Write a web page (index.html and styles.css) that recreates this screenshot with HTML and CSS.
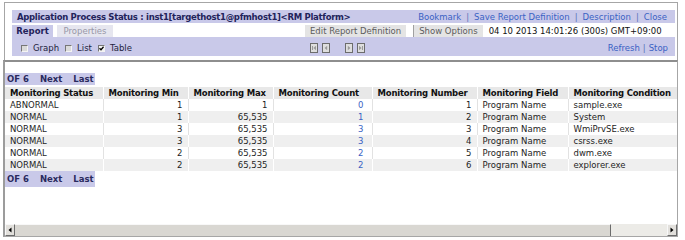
FILE: index.html
```html
<!DOCTYPE html>
<html lang="en">
<head>
    <meta charset="UTF-8"/>
    <title>Application Process Status</title>
    <link rel="stylesheet" href="styles.css">
</head>
<body>
<div class="report-frame">
    <div class="title-bar">
        <span class="report-title">Application Process Status : inst1[targethost1@pfmhost1]&lt;RM Platform&gt;</span>
        <span class="title-links">
            <a href="#">Bookmark</a><span class="sep">|</span><a href="#">Save Report Definition</a><span class="sep">|</span><a href="#">Description</a><span class="sep">|</span><a href="#">Close</a>
        </span>
    </div>

    <div class="tab-row">
        <div class="tabs">
            <span class="tab tab-active">Report</span>
            <span class="tab">Properties</span>
        </div>
        <span class="tab-button">Edit Report Definition</span>
        <span class="tab-button tab-button-options">Show Options</span>
        <span class="report-date">04 10 2013 14:01:26 (300s) GMT+09:00</span>
    </div>

    <div class="tool-bar">
        <div class="views">
            <label class="view"><span class="check"></span>Graph</label>
            <label class="view"><span class="check"></span>List</label>
            <label class="view"><span class="check checked">
                <svg width="5" height="5" viewBox="0 0 5 5"><path d="M0.5 2.3 L2 3.8 L4.6 0.8" fill="none" stroke="#000" stroke-width="1.3"/></svg>
            </span>Table</label>
        </div>
        <div class="pager">
            <!-- first -->
            <svg class="pager-btn" width="8" height="10" viewBox="0 0 8 10">
                <rect x="0.5" y="0.5" width="7" height="9" fill="#dedede" stroke="#6c6c6c"/>
                <path d="M2.5 3 V7" stroke="#9a9a9a"/>
                <path d="M6 2.8 L3.4 5 L6 7.2 Z" fill="#9a9a9a"/>
            </svg>
            <!-- previous -->
            <svg class="pager-btn" width="8" height="10" viewBox="0 0 8 10">
                <rect x="0.5" y="0.5" width="7" height="9" fill="#dedede" stroke="#6c6c6c"/>
                <path d="M5.2 2.8 L2.6 5 L5.2 7.2 Z" fill="#9a9a9a"/>
            </svg>
            <!-- next -->
            <svg class="pager-btn pager-gap" width="8" height="10" viewBox="0 0 8 10">
                <rect x="0.5" y="0.5" width="7" height="9" fill="#dedede" stroke="#6c6c6c"/>
                <path d="M2.8 2.8 L5.4 5 L2.8 7.2 Z" fill="#9a9a9a"/>
            </svg>
            <!-- last -->
            <svg class="pager-btn" width="8" height="10" viewBox="0 0 8 10">
                <rect x="0.5" y="0.5" width="7" height="9" fill="#dedede" stroke="#6c6c6c"/>
                <path d="M2 2.8 L4.6 5 L2 7.2 Z" fill="#9a9a9a"/>
                <path d="M5.5 3 V7" stroke="#9a9a9a"/>
            </svg>
        </div>
        <span class="tool-links"><a href="#">Refresh</a><span class="sep">|</span><a href="#">Stop</a></span>
    </div>
</div>

<div class="data-frame">
    <div class="data-view">
        <div class="page-nav">
            <span>OF 6</span><span>Next</span><span>Last</span>
        </div>

        <table class="data-table">
            <colgroup>
                <col style="width: 98px">
                <col style="width: 85px">
                <col style="width: 85px">
                <col style="width: 99px">
                <col style="width: 105px">
                <col style="width: 91px">
                <col style="width: 112px">
            </colgroup>
            <thead>
            <tr>
                <th>Monitoring Status</th>
                <th>Monitoring Min</th>
                <th>Monitoring Max</th>
                <th>Monitoring Count</th>
                <th>Monitoring Number</th>
                <th>Monitoring Field</th>
                <th>Monitoring Condition</th>
            </tr>
            </thead>
            <tbody>
            <tr>
                <td>ABNORMAL</td><td class="num">1</td><td class="num">1</td>
                <td class="num count"><a href="#">0</a></td><td class="num">1</td>
                <td>Program Name</td><td>sample.exe</td>
            </tr>
            <tr>
                <td>NORMAL</td><td class="num">1</td><td class="num">65,535</td>
                <td class="num count"><a href="#">1</a></td><td class="num">2</td>
                <td>Program Name</td><td>System</td>
            </tr>
            <tr>
                <td>NORMAL</td><td class="num">3</td><td class="num">65,535</td>
                <td class="num count"><a href="#">3</a></td><td class="num">3</td>
                <td>Program Name</td><td>WmiPrvSE.exe</td>
            </tr>
            <tr>
                <td>NORMAL</td><td class="num">3</td><td class="num">65,535</td>
                <td class="num count"><a href="#">3</a></td><td class="num">4</td>
                <td>Program Name</td><td>csrss.exe</td>
            </tr>
            <tr>
                <td>NORMAL</td><td class="num">2</td><td class="num">65,535</td>
                <td class="num count"><a href="#">2</a></td><td class="num">5</td>
                <td>Program Name</td><td>dwm.exe</td>
            </tr>
            <tr>
                <td>NORMAL</td><td class="num">2</td><td class="num">65,535</td>
                <td class="num count"><a href="#">2</a></td><td class="num">6</td>
                <td>Program Name</td><td>explorer.exe</td>
            </tr>
            </tbody>
        </table>

        <div class="page-nav page-nav-bottom">
            <span>OF 6</span><span>Next</span><span>Last</span>
        </div>
    </div>

    <div class="hscroll">
        <span class="hscroll-btn">
            <svg width="4" height="6" viewBox="0 0 4 6"><path d="M3.5 0.5 L0.5 3 L3.5 5.5 Z" fill="#000"/></svg>
        </span>
        <span class="hscroll-thumb"></span>
        <span class="hscroll-track"></span>
        <span class="hscroll-btn">
            <svg width="4" height="6" viewBox="0 0 4 6"><path d="M0.5 0.5 L3.5 3 L0.5 5.5 Z" fill="#000"/></svg>
        </span>
    </div>
</div>
</body>
</html>
```

FILE: styles.css
```css
/* Base */
body {
    margin: 0;
    background-color: #ffffff;
    font-family: "DejaVu Sans", Verdana, sans-serif;
    font-size: 8.5px;
    color: #1e1e1e;
}

a {
    color: #3a62c4;
    text-decoration: none;
}

.sep {
    color: #5a74b8;
}

/* Report header frame */
.report-frame {
    margin: 2px 7px 0 4px;
    padding: 7px 2px 4px 7px;
    border: 1px solid #a6a6a6;
    border-bottom: none;
}

.title-bar {
    display: flex;
    justify-content: space-between;
    align-items: center;
    height: 13px;
    padding: 0 8px 0 5px;
    background-color: #c9c9e9;
}

.report-title {
    font-weight: bold;
    letter-spacing: -0.3px;
    color: #23235b;
}

.title-links .sep {
    margin: 0 5px;
}

/* Tabs */
.tab-row {
    display: flex;
    height: 12px;
    margin-top: 2px;
    line-height: 12px;
}

.tabs {
    display: flex;
    gap: 4px;
    width: 293px;
}

.tab {
    width: 56px;
    text-align: center;
    background-color: #e6e6ef;
    color: #9898a8;
}

.tab-active {
    width: 41px;
    background-color: #c9c9e9;
    color: #23235b;
    font-weight: bold;
}

.tab-button {
    padding: 0 5px;
    background-color: #e4e4e4;
    color: #5c5c5c;
}

.tab-button-options {
    margin-left: 7px;
    border-left: 1px solid #a0a0a0;
}

.report-date {
    flex: 1;
    padding-left: 6px;
    color: #111111;
}

/* Toolbar */
.tool-bar {
    display: flex;
    align-items: center;
    box-sizing: border-box;
    height: 19px;
    padding: 3px 7px 0 9px;
    background-color: #c9c9e9;
}

.views {
    display: flex;
    align-items: center;
    width: 289px;
}

.view {
    display: flex;
    align-items: center;
    margin-right: 6px;
    color: #1e1e3e;
}

.check {
    display: flex;
    align-items: center;
    justify-content: center;
    box-sizing: border-box;
    width: 7px;
    height: 7px;
    margin-right: 5px;
    border: 1px solid;
    border-color: #767676 #f4f4f4 #f4f4f4 #767676;
    background-color: #dadada;
}

.check.checked {
    background-color: #f2f2f2;
}

.pager {
    display: flex;
    align-items: center;
}

.pager-btn {
    margin-right: 4px;
}

.pager-gap {
    margin-left: 11px;
}

.tool-links {
    margin-left: auto;
}

.tool-links .sep {
    margin: 0 3px;
}

/* Data frame */
.data-frame {
    display: flex;
    flex-direction: column;
    box-sizing: border-box;
    height: 177px;
    margin: 0 7px 0 3px;
    border-top: 2px solid #8e8e8e;
    border-left: 2px solid #9c9c9c;
    border-right: 1px solid #a6a6a6;
    border-bottom: 1px solid #a6a6a6;
}

.data-view {
    flex: 1;
    overflow: hidden;
    padding-top: 11px;
}

.page-nav {
    display: flex;
    align-items: center;
    gap: 11px;
    box-sizing: border-box;
    width: 90px;
    height: 12px;
    margin-bottom: 2px;
    padding-left: 2px;
    background-color: #c9c9e9;
    color: #2a2a5e;
    font-weight: bold;
}

.page-nav-bottom {
    height: 16px;
    margin-bottom: 0;
}

/* Table */
.data-table {
    border-collapse: collapse;
    table-layout: fixed;
    width: 675px;
}

.data-table th,
.data-table td {
    height: 12px;
    padding: 0 5px;
    line-height: 12px;
    white-space: nowrap;
    overflow: hidden;
    text-align: left;
    border-right: 1px solid #e2e2e2;
}

.data-table th {
    background-color: #e8e8e8;
    border-right-color: #ffffff;
    color: #111111;
    letter-spacing: -0.2px;
}

.data-table tbody tr:nth-child(even) td {
    background-color: #efefef;
    border-right-color: #ffffff;
}

.data-table td.num {
    text-align: right;
}

.data-table td.count {
    padding-right: 8px;
}

/* Horizontal scrollbar */
.hscroll {
    display: flex;
    height: 12px;
    background-color: #ecebe7;
}

.hscroll-btn {
    display: flex;
    align-items: center;
    justify-content: center;
    box-sizing: border-box;
    width: 10px;
    border: 1px solid;
    border-color: #f8f8f8 #6c6c6c #6c6c6c #f8f8f8;
    background-color: #e2e0dc;
}

.hscroll-thumb {
    width: 596px;
    box-sizing: border-box;
    border-top: 1px solid #f8f8f8;
    border-right: 1px solid #6c6c6c;
    background-color: #d9d7d2;
}

.hscroll-track {
    flex: 1;
}
```
